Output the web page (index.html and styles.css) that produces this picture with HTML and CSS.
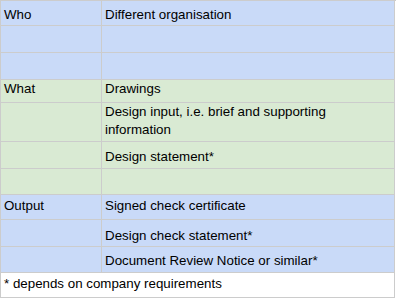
FILE: index.html
```html
<!DOCTYPE html>
<html>
<head>
<meta charset="utf-8">
<link rel="stylesheet" href="styles.css">
</head>
<body>
<div class="sheet">
  <div class="cell blue r1">Who</div>
  <div class="cell blue r1">Different organisation</div>
  <div class="cell blue"></div>
  <div class="cell blue"></div>
  <div class="cell blue"></div>
  <div class="cell blue"></div>

  <div class="cell green r4">What</div>
  <div class="cell green r4">Drawings</div>
  <div class="cell green r5"></div>
  <div class="cell green r5">Design input, i.e. brief and supporting information</div>
  <div class="cell green r6"></div>
  <div class="cell green r6">Design statement*</div>
  <div class="cell green"></div>
  <div class="cell green"></div>

  <div class="cell blue r8">Output</div>
  <div class="cell blue r8">Signed check certificate</div>
  <div class="cell blue r9"></div>
  <div class="cell blue r9">Design check statement*</div>
  <div class="cell blue r10"></div>
  <div class="cell blue r10">Document Review Notice or similar*</div>

  <div class="cell note r11">* depends on company requirements</div>
</div>
</body>
</html>
```
FILE: styles.css
```css
html, body {
  margin: 0;
  padding: 0;
  background: #ffffff;
}

.sheet {
  display: grid;
  grid-template-columns: 101px 293px;
  grid-template-rows: 25px 27px 27px 23px 39px 27px 26px 25px 27px 26px 25px;
  width: 395px;
  border-top: 1px solid #cccccc;
  border-left: 1px solid #cccccc;
  font-family: "Liberation Sans", Arial, sans-serif;
  font-size: 13.33px;
  line-height: 17.6px;
  color: #000000;
}

.cell {
  box-sizing: border-box;
  border-right: 1px solid #cccccc;
  border-bottom: 1px solid #cccccc;
  padding: 0 4px 0 3px;
  overflow: hidden;
}

.blue { background: #c9daf8; }
.green { background: #d9ead3; }
.note {
  background: #ffffff;
  grid-column: 1 / span 2;
}

.r1 { padding-top: 5px; }
.r4 { padding-top: 0; }
.r5 { padding-top: 0; }
.r6 { padding-top: 6px; }
.r8 { padding-top: 2px; }
.r9 { padding-top: 6.5px; }
.r10 { padding-top: 5px; }
.r11 { padding-top: 2px; }
```
